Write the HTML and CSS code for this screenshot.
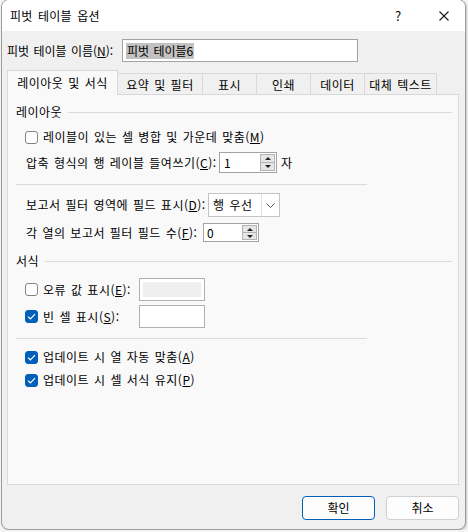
FILE: index.html
```html
<!DOCTYPE html>
<html lang="ko">
<head>
<meta charset="utf-8">
<title>피벗 테이블 옵션</title>
<link rel="stylesheet" href="styles.css">
</head>
<body>
<div class="dialog">
  <div class="titlebar">
    <span class="title">피벗 테이블 옵션</span>
    <span class="help">?</span>
    <svg class="close" width="10" height="10" viewBox="0 0 10 10"><path d="M0.5 0.5 L9.5 9.5 M9.5 0.5 L0.5 9.5" stroke="#1a1a1a" stroke-width="1.1" fill="none"/></svg>
  </div>
  <div class="body">
    <div class="name-row">
      <span class="name-label">피벗 테이블 이름(<u>N</u>):</span>
      <div class="textbox"><span class="sel">피벗 테이블6</span></div>
    </div>
    <div class="tabs">
      <div class="tab active" style="width:111px">레이아웃 및 서식</div>
      <div class="tab" style="width:84px">요약 및 필터</div>
      <div class="tab" style="width:54px">표시</div>
      <div class="tab" style="width:54px">인쇄</div>
      <div class="tab" style="width:54px">데이터</div>
      <div class="tab last" style="width:73px">대체 텍스트</div>
    </div>
    <div class="panel">
      <div class="group-head"><span>레이아웃</span><div class="rule"></div></div>

      <div class="row check-row r-merge">
        <span class="cb"></span>
        <span>레이블이 있는 셀 병합 및 가운데 맞춤(<u>M</u>)</span>
      </div>

      <div class="row text-row r-indent">
        <span class="lbl w-indent">압축 형식의 행 레이블 들여쓰기(<u>C</u>):</span>
        <div class="spin w58">
          <span class="spin-val">1</span>
          <div class="spin-btns"><span class="up"></span><span class="down"></span></div>
        </div>
        <span class="unit">자</span>
      </div>

      <div class="sep r-sep1"></div>

      <div class="row text-row r-filter">
        <span class="lbl w-filter">보고서 필터 영역에 필드 표시(<u>D</u>):</span>
        <div class="combo">
          <span class="combo-val">행 우선</span>
          <span class="combo-arrow"><svg width="9" height="5" viewBox="0 0 9 5"><path d="M0.5 0.5 L4.5 4.5 L8.5 0.5" stroke="#555" stroke-width="1" fill="none"/></svg></span>
        </div>
      </div>

      <div class="row text-row r-fields">
        <span class="lbl w-fields">각 열의 보고서 필터 필드 수(<u>F</u>):</span>
        <div class="spin w56 h19">
          <span class="spin-val">0</span>
          <div class="spin-btns"><span class="up"></span><span class="down"></span></div>
        </div>
      </div>

      <div class="group-head r-format"><span>서식</span><div class="rule"></div></div>

      <div class="row check-row r-err">
        <span class="cb"></span>
        <span class="lbl w-cbl">오류 값 표시(<u>E</u>):</span>
        <div class="valbox disabled"><div class="fill"></div></div>
      </div>

      <div class="row check-row r-empty">
        <span class="cb on"><svg width="9" height="7" viewBox="0 0 9 7"><path d="M1 3.6 L3.4 5.8 L8 1.2" stroke="#fff" stroke-width="1.2" fill="none"/></svg></span>
        <span class="lbl w-cbl">빈 셀 표시(<u>S</u>):</span>
        <div class="valbox"></div>
      </div>

      <div class="sep r-sep2"></div>

      <div class="row check-row r-auto">
        <span class="cb on"><svg width="9" height="7" viewBox="0 0 9 7"><path d="M1 3.6 L3.4 5.8 L8 1.2" stroke="#fff" stroke-width="1.2" fill="none"/></svg></span>
        <span>업데이트 시 열 자동 맞춤(<u>A</u>)</span>
      </div>

      <div class="row check-row r-keep">
        <span class="cb on"><svg width="9" height="7" viewBox="0 0 9 7"><path d="M1 3.6 L3.4 5.8 L8 1.2" stroke="#fff" stroke-width="1.2" fill="none"/></svg></span>
        <span>업데이트 시 셀 서식 유지(<u>P</u>)</span>
      </div>
    </div>
    <div class="footer">
      <button class="btn primary">확인</button>
      <button class="btn">취소</button>
    </div>
  </div>
</div>
</body>
</html>
```
FILE: styles.css
```css
html, body {
  margin: 0;
  padding: 0;
}
body {
  background: #f4f4f4;
  font-family: "Noto Sans CJK KR", "Noto Sans", sans-serif;
  font-size: 12px;
  color: #000;
  word-spacing: 1px;
  overflow: hidden;
}
u {
  text-decoration: underline;
  text-underline-offset: 1px;
}
.dialog {
  margin-left: 1px;
  margin-top: -1px;
  width: 465px;
  height: 531px;
  box-sizing: border-box;
  border: 1px solid #9c9c9c;
  border-radius: 8px;
  background: #f0f0f0;
  overflow: hidden;
  display: flex;
  flex-direction: column;
  box-shadow: 1px 1px 2px rgba(0,0,0,0.18);
}
.titlebar {
  height: 31px;
  flex: 0 0 31px;
  background: #fff;
  display: flex;
  align-items: center;
  padding-left: 8px;
}
.title {
  flex: 1;
  font-size: 12px;
  word-spacing: 2px;
  letter-spacing: 0.2px;
  line-height: 16px;
}
.help {
  width: 20px;
  text-align: center;
  margin-right: 31px;
  font-size: 13px;
  line-height: 16px;
}
.close {
  margin-right: 16px;
  display: block;
}
.body {
  padding: 0 6px 0 5px;
  display: flex;
  flex-direction: column;
}
.name-row {
  margin-top: 8px;
  height: 23px;
  display: flex;
  align-items: center;
}
.name-label {
  flex: 0 0 115px;
  white-space: nowrap;
}
.textbox {
  width: 236px;
  height: 23px;
  box-sizing: border-box;
  border: 1px solid #a3a3a3;
  background: #fff;
  display: flex;
  align-items: center;
  padding-left: 3px;
}
.sel {
  background: #c2c2c2;
  line-height: 16px;
  padding: 0 1px;
}
.tabs {
  margin-top: 9px;
  height: 24px;
  display: flex;
  align-items: flex-end;
  margin-bottom: -1px;
  letter-spacing: 0.5px;
}
.tab {
  height: 22px;
  box-sizing: border-box;
  border-top: 1px solid #d9d9d9;
  border-left: 1px solid #d9d9d9;
  display: flex;
  align-items: center;
  justify-content: center;
  white-space: nowrap;
  background: #f0f0f0;
}
.tab.last {
  border-right: 1px solid #d9d9d9;
}
.tab.active {
  height: 25px;
  background: #f9f9f9;
  border-right: 1px solid #d9d9d9;
  position: relative;
  z-index: 1;
  padding-bottom: 1px;
}
.tab.active + .tab {
  border-left: none;
}
.panel {
  width: 452px;
  height: 391px;
  box-sizing: border-box;
  border: 1px solid #d9d9d9;
  background: #f9f9f9;
  padding: 9px 6px 0 8px;
  display: flex;
  flex-direction: column;
  letter-spacing: 0.5px;
}
.group-head {
  height: 16px;
  display: flex;
  align-items: center;
  line-height: 16px;
}
.group-head .rule {
  flex: 1;
  height: 1px;
  background: #dadada;
  margin-left: 6px;
}
.row {
  display: flex;
  align-items: center;
  white-space: nowrap;
  line-height: 16px;
}
.check-row {
  padding-left: 9px;
  height: 16px;
}
.text-row {
  padding-left: 10px;
}
.cb {
  width: 13px;
  height: 13px;
  box-sizing: border-box;
  border: 1px solid #858585;
  border-radius: 3px;
  background: #fff;
  margin-right: 5px;
  flex: 0 0 13px;
  display: flex;
  align-items: center;
  justify-content: center;
}
.cb.on {
  background: #005fb8;
  border-color: #005fb8;
}
.cb svg { display: block; }
.lbl { display: block; }
.w-indent { width: 193px; }
.w-filter { width: 182px; }
.w-fields { width: 177px; }
.w-cbl { width: 96px; }

.r-merge { margin-top: 9px; }
.r-indent { margin-top: 7px; height: 21px; }
.r-sep1 { margin-top: 11px; }
.r-filter { margin-top: 8px; height: 24px; }
.r-fields { margin-top: 6px; height: 19px; }
.r-format { margin-top: 11px; }
.r-err { margin-top: 9px; height: 23px; }
.r-empty { margin-top: 4px; height: 23px; }
.r-sep2 { margin-top: 10px; }
.r-auto { margin-top: 10px; }
.r-keep { margin-top: 7px; }

.sep {
  width: 351px;
  height: 1px;
  background: #dadada;
}
.spin {
  height: 21px;
  box-sizing: border-box;
  border: 1px solid #a3a3a3;
  background: #fff;
  display: flex;
  align-items: center;
  padding: 1px 1px 1px 4px;
}
.w58 { width: 58px; }
.w56 { width: 56px; }
.spin.h19 { height: 19px; padding-left: 3px; }
.spin-val { flex: 1; }
.spin-btns {
  width: 15px;
  height: 100%;
  display: flex;
  flex-direction: column;
}
.spin-btns span {
  flex: 1;
  background: #e6e6e6;
  border: 1px solid #b3b3b3;
  display: flex;
  align-items: center;
  justify-content: center;
}
.spin-btns span + span { border-top: none; }
.spin-btns .up::before {
  content: "";
  border-left: 3px solid transparent;
  border-right: 3px solid transparent;
  border-bottom: 3px solid #222;
}
.spin-btns .down::before {
  content: "";
  border-left: 3px solid transparent;
  border-right: 3px solid transparent;
  border-top: 3px solid #222;
}
.unit { margin-left: 4px; }
.combo {
  width: 72px;
  height: 24px;
  box-sizing: border-box;
  border: 1px solid #c4c4c4;
  background: #fff;
  display: flex;
  align-items: stretch;
}
.combo-val {
  flex: 1;
  padding-left: 4px;
  display: flex;
  align-items: center;
}
.combo-arrow {
  width: 17px;
  border-left: 1px solid #e3e3e3;
  display: flex;
  align-items: center;
  justify-content: center;
}
.combo-arrow svg { display: block; }
.valbox {
  width: 66px;
  height: 23px;
  box-sizing: border-box;
  border: 1px solid #b0b0b0;
  background: #fff;
  padding: 3px;
}
.valbox .fill {
  width: 100%;
  height: 100%;
  background: #efefef;
}
.footer {
  margin-top: 11px;
  display: flex;
  justify-content: flex-end;
  gap: 11px;
}
.btn {
  width: 73px;
  height: 24px;
  box-sizing: border-box;
  border: 1px solid #d0d0d0;
  border-radius: 4px;
  background: #fdfdfd;
  font-family: "Noto Sans CJK KR", "Noto Sans", sans-serif;
  font-size: 12px;
  color: #000;
  padding: 0;
  line-height: 16px;
}
.btn.primary {
  border-color: #005fb8;
}
```
